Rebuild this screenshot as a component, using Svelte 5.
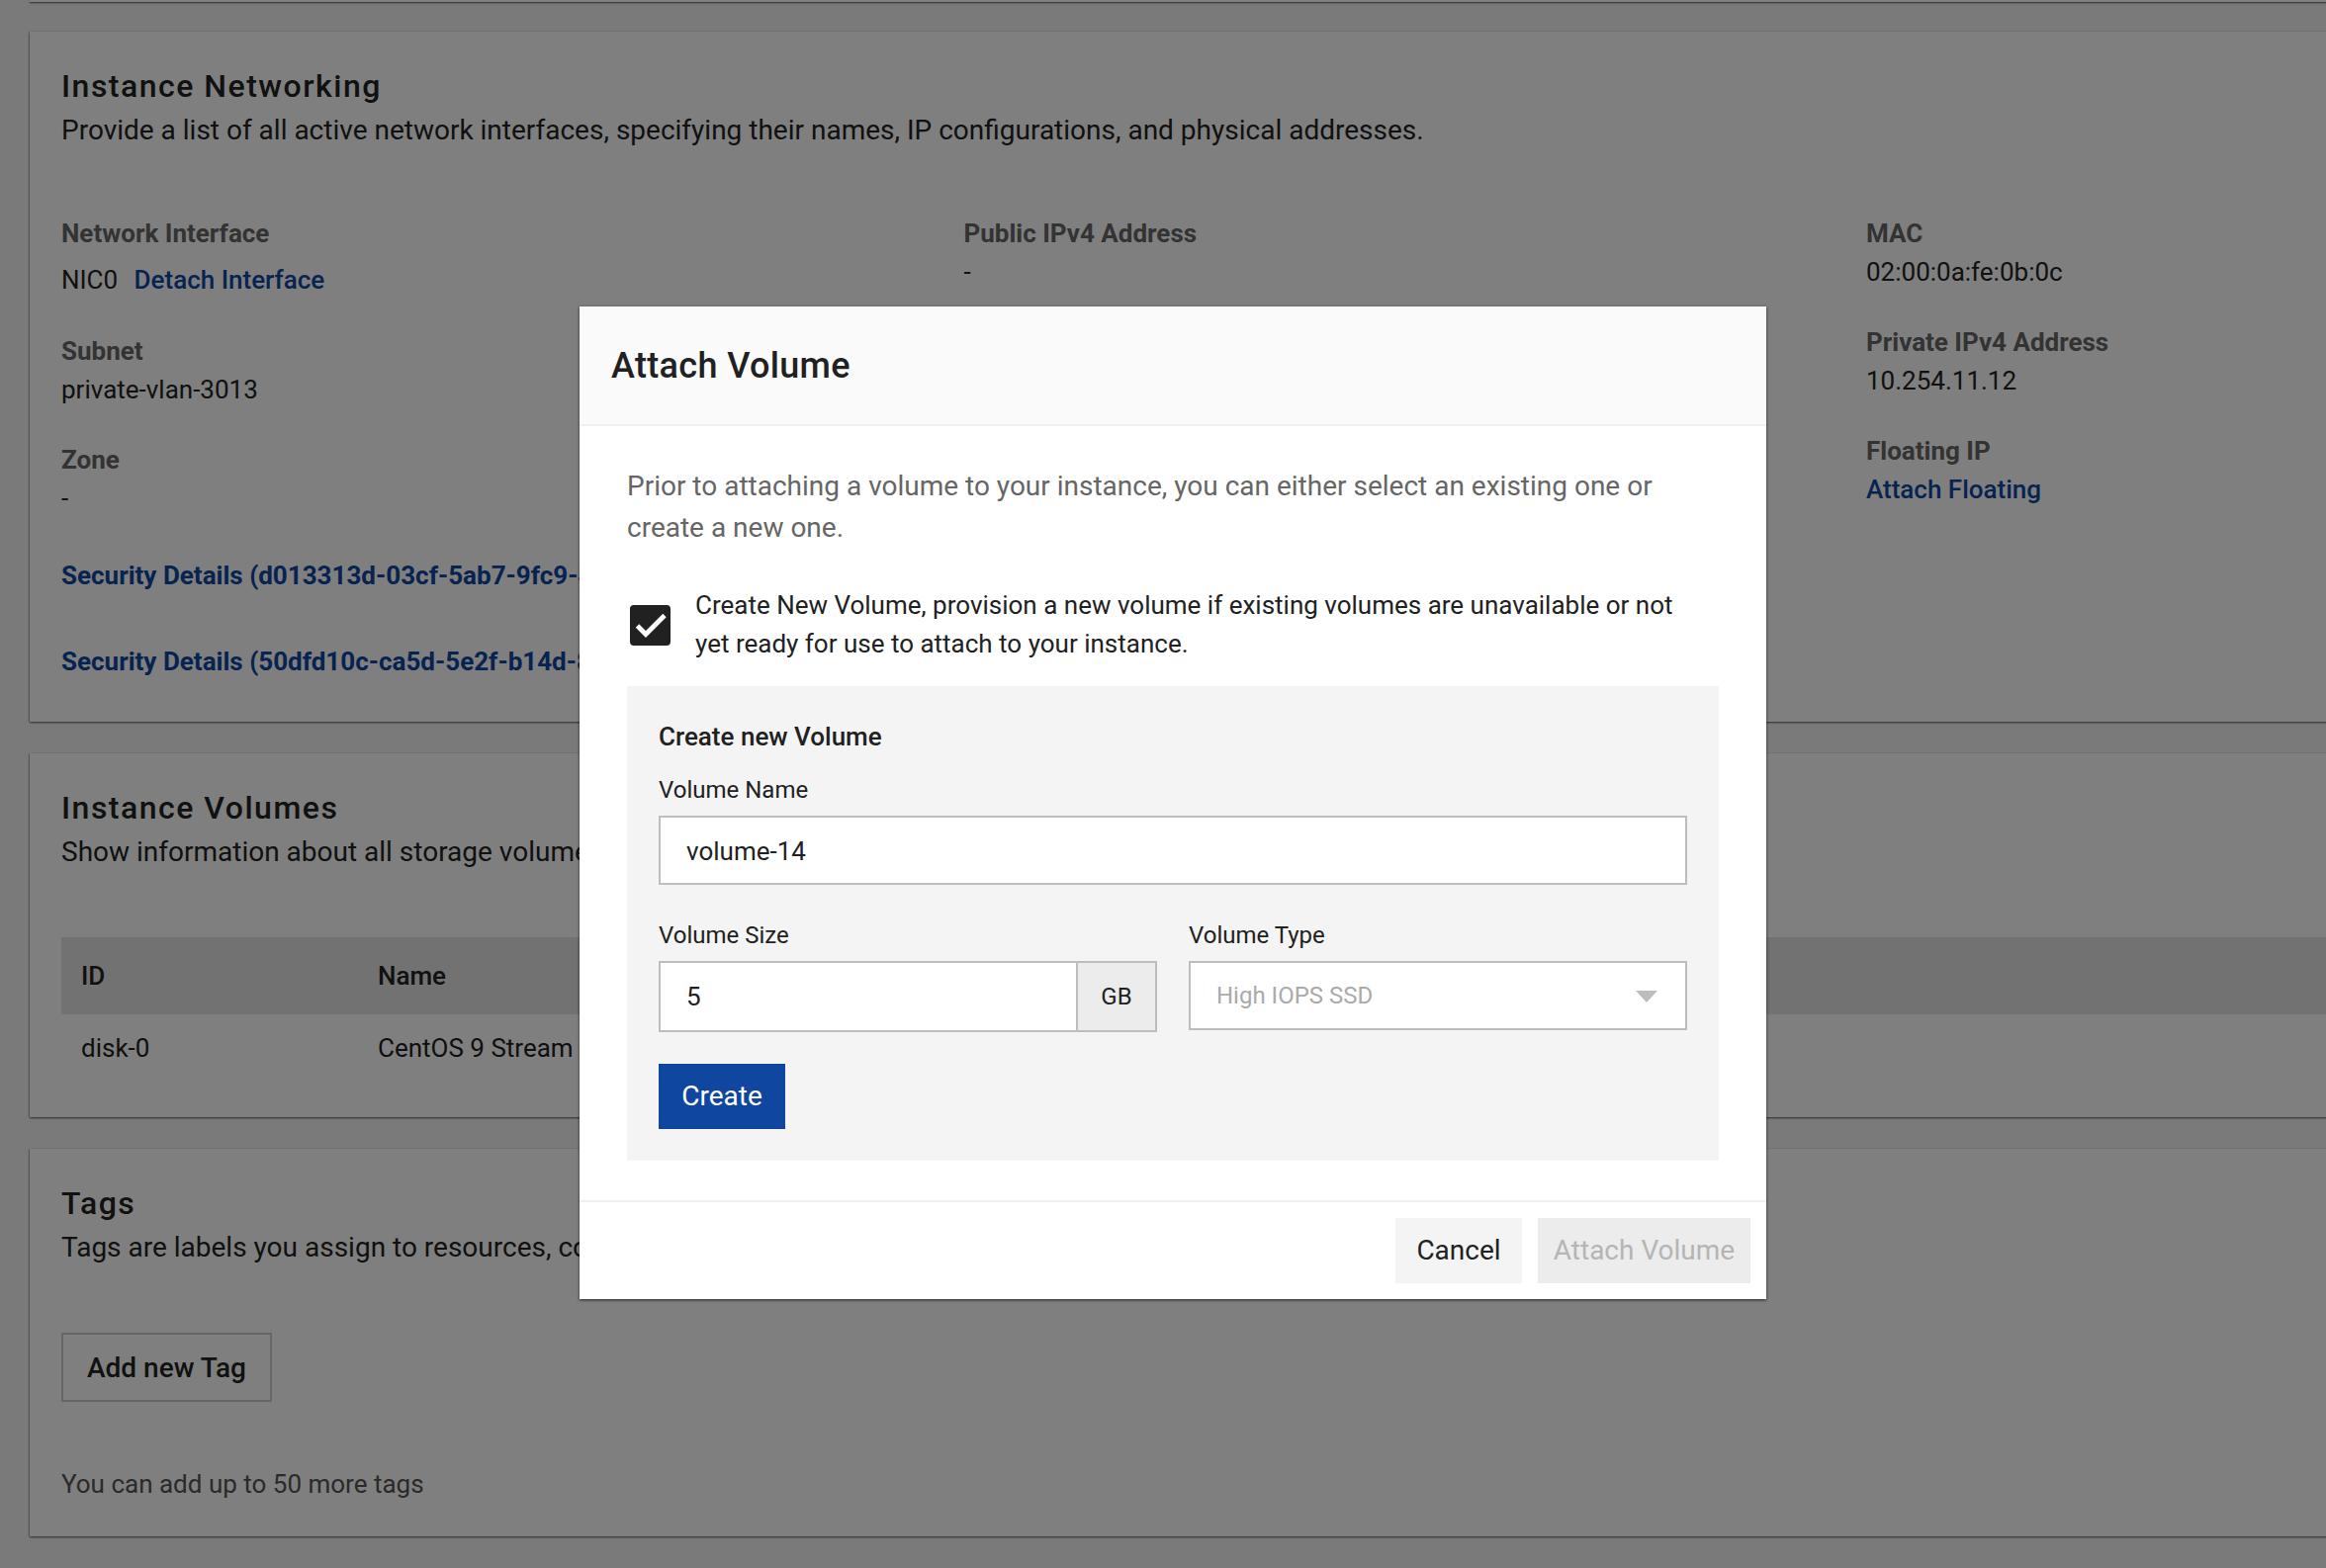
<script>
  const col1 = [
    { label: 'Subnet', value: 'private-vlan-3013' },
    { label: 'Zone', value: '-' }
  ];
  const col3 = [
    { label: 'MAC', value: '02:00:0a:fe:0b:0c' },
    { label: 'Private IPv4 Address', value: '10.254.11.12' }
  ];
</script>

<div class="page">
  <div class="stub"></div>

  <section class="card">
    <h2>Instance Networking</h2>
    <p class="desc net">Provide a list of all active network interfaces, specifying their names, IP configurations, and physical addresses.</p>
    <div class="grid">
      <div>
        <div class="item first">
          <div class="label">Network Interface</div>
          <div class="value nic">NIC0 <a href="#top" class="link detach">Detach Interface</a></div>
        </div>
        {#each col1 as it}
          <div class="item">
            <div class="label">{it.label}</div>
            <div class="value">{it.value}</div>
          </div>
        {/each}
        <div class="secs">
          <div class="sec"><a href="#top" class="link">Security Details (d013313d-03cf-5ab7-9fc9-4c1a7e20b6d3)</a></div>
          <div class="sec"><a href="#top" class="link">Security Details (50dfd10c-ca5d-5e2f-b14d-8e3f6a91c2d7)</a></div>
        </div>
      </div>
      <div>
        <div class="item">
          <div class="label">Public IPv4 Address</div>
          <div class="value">-</div>
        </div>
      </div>
      <div>
        {#each col3 as it}
          <div class="item">
            <div class="label">{it.label}</div>
            <div class="value">{it.value}</div>
          </div>
        {/each}
        <div class="item">
          <div class="label">Floating IP</div>
          <div class="value"><a href="#top" class="link strong">Attach Floating</a></div>
        </div>
      </div>
    </div>
  </section>

  <section class="card vols">
    <h2>Instance Volumes</h2>
    <p class="desc">Show information about all storage volumes attached to this instance.</p>
    <div class="table">
      <div class="tr th"><span class="c1">ID</span><span>Name</span></div>
      <div class="tr td"><span class="c1">disk-0</span><span>CentOS 9 Stream</span></div>
    </div>
  </section>

  <section class="card tags">
    <h2>Tags</h2>
    <p class="desc">Tags are labels you assign to resources, collections of metadata that help you organize them.</p>
    <button class="add">Add new Tag</button>
    <p class="note">You can add up to 50 more tags</p>
  </section>

  <div class="overlay">
    <div class="modal">
      <header>Attach Volume</header>
      <div class="body">
        <p class="prior">Prior to attaching a volume to your instance, you can either select an existing one or create a new one.</p>
        <div class="check">
          <span class="box">
            <svg viewBox="0 0 40 40" width="40" height="40"><path d="M6.5 21 L15 29.5 L34 10.5" fill="none" stroke="#fff" stroke-width="4.8"/></svg>
          </span>
          <span class="chk-text">Create New Volume, provision a new volume if existing volumes are unavailable or not yet ready for use to attach to your instance.</span>
        </div>
        <div class="panel">
          <div class="p-title">Create new Volume</div>
          <div class="f-label">Volume Name</div>
          <input class="input" value="volume-14" />
          <div class="row">
            <div class="size">
              <div class="f-label">Volume Size</div>
              <div class="group">
                <input class="g-input" value="5" />
                <span class="addon">GB</span>
              </div>
            </div>
            <div class="type">
              <div class="f-label">Volume Type</div>
              <div class="select">
                <span>High IOPS SSD</span>
                <svg viewBox="0 0 22 12" width="22" height="12"><path d="M0 0 H22 L11 12 Z" fill="#bdbdbd"/></svg>
              </div>
            </div>
          </div>
          <button class="create">Create</button>
        </div>
      </div>
      <footer>
        <button class="cancel">Cancel</button>
        <button class="attach" disabled>Attach Volume</button>
      </footer>
    </div>
  </div>
</div>

<style>
  :global(body) { margin: 0; overflow: hidden; }
  * { box-sizing: border-box; }
  .page {
    position: relative;
    width: 2352px;
    height: 1586px;
    overflow: hidden;
    background: #f5f5f5;
    font-family: Roboto, "Liberation Sans", sans-serif;
    color: #212121;
    font-size: 27px;
    padding-left: 30px;
  }
  .stub { width: 2860px; height: 2px; background: #fff; box-shadow: 0 1px 2px rgba(0,0,0,.7); margin-bottom: 30px; }
  .card {
    width: 2860px;
    background: #fff;
    padding: 33px 32px 41px;
    box-shadow: 0 1px 2px rgba(0,0,0,.65), -1px 0 1px rgba(0,0,0,.12);
    margin-bottom: 32px;
    white-space: nowrap;
  }
  h2 { margin: 0; font-size: 32px; line-height: 44px; font-weight: 500; letter-spacing: 1.5px; color: #222; }
  .desc { margin: 1px 0 64px; font-size: 28px; line-height: 44px; color: #222; }
  .desc.net { margin-bottom: 63px; }
  .grid { display: grid; grid-template-columns: repeat(3, 912.5px); }
  .item { margin-bottom: 32px; }
  .item.first { margin-bottom: 33px; }
  .label { font-size: 26px; line-height: 39px; font-weight: 700; color: #666; }
  .value { font-size: 26px; line-height: 39px; color: #222; }
  .nic { margin-top: 8px; }
  .link { color: #0f46a0; text-decoration: none; }
  .detach { margin-left: 10px; font-weight: 500; }
  .strong { font-weight: 500; }
  .secs { margin-top: 39px; }
  .sec { font-size: 26px; line-height: 39px; margin-bottom: 48px; font-weight: 700; }
  .sec:last-child { margin-bottom: 0; }
  .vols { padding-bottom: 38px; }
  .table { width: 100%; font-size: 26px; }
  .tr { display: flex; height: 66px; align-items: center; padding-left: 20px; }
  .td { padding-top: 2px; }
  .th { height: 78px; background: #e4e4e4; font-weight: 500; color: #222; }
  .c1 { width: 300px; }
  .add {
    display: block;
    width: 213px;
    height: 70px;
    background: transparent;
    border: 2px solid #ccc;
    font: 500 28px Roboto, sans-serif;
    color: #222;
    padding: 0;
  }
  .note { margin: 64px 0 0; font-size: 26px; line-height: 39px; color: #555; }
  .tags { padding-bottom: 33px; }

  .overlay {
    position: absolute;
    inset: 0;
    background: rgba(0,0,0,.5);
    display: flex;
    justify-content: center;
    align-items: flex-start;
    padding: 310px 0 0 20px;
  }
  .modal {
    width: 1200px;
    background: #fff;
    box-shadow: 0 1px 3px rgba(0,0,0,.7);
  }
  header {
    height: 121px;
    padding: 0 32px;
    display: flex;
    align-items: center;
    background: #fafafa;
    border-bottom: 2px solid #f0f0f0;
    font-size: 36px;
    font-weight: 500;
    letter-spacing: .35px;
    color: #212121;
  }
  .body { padding: 40px 48px 40px; }
  .prior { margin: 0 0 38px; font-size: 28px; line-height: 42px; color: #666; }
  .check { display: flex; align-items: center; gap: 25px; margin-bottom: 23px; padding-right: 24px; }
  .box { flex: none; width: 41px; height: 41px; margin-left: 3px; background: #212121; border-radius: 4px; display: flex; align-items: center; justify-content: center; }
  .box svg { display: block; }
  .chk-text { font-size: 26px; line-height: 39px; color: #212121; }
  .panel { background: #f4f4f4; padding: 32px; }
  .p-title { font-size: 26px; line-height: 38px; font-weight: 500; margin-bottom: 16px; }
  .f-label { font-size: 24px; line-height: 36px; padding-top: 1px; height: 36px; margin-bottom: 9px; color: #212121; }
  .input, .g-input {
    display: block;
    font: 400 26px Roboto, sans-serif;
    color: #212121;
    background: #fff;
    outline: none;
  }
  .input { width: 100%; height: 70px; border: 2px solid #bdbdbd; padding: 2px 26px 0; margin-bottom: 32px; }
  .row { display: flex; gap: 32px; align-items: flex-start; margin-bottom: 32px; }
  .size { width: 504px; }
  .type { width: 504px; }
  .group { display: flex; height: 72px; border: 2px solid #bdbdbd; }
  .g-input { flex: 1; min-width: 0; border: 0; padding: 0 26px; }
  .addon { width: 80px; flex: none; border-left: 2px solid #bdbdbd; background: #ececec; display: flex; align-items: center; justify-content: center; font-size: 24px; }
  .select { height: 70px; border: 2px solid #bdbdbd; background: #fff; padding: 0 28px 0 26px; display: flex; align-items: center; justify-content: space-between; font-size: 24px; color: #aaa; }
  .select svg { display: block; margin-top: 2px; }
  .create { display: block; width: 128px; height: 66px; border: 0; background: #0f46a0; color: #fff; font: 400 28px Roboto, sans-serif; padding: 0 0 1px; }
  footer { height: 100px; border-top: 2px solid #f0f0f0; padding: 16px; display: flex; justify-content: flex-end; gap: 16px; }
  footer button { height: 66px; border: 0; font: 400 28px Roboto, sans-serif; padding: 0 0 1px; }
  .cancel { width: 128px; background: #f4f4f4; color: #212121; }
  .attach { width: 215px; background: #ececec; color: #b5b5b5; }
</style>
